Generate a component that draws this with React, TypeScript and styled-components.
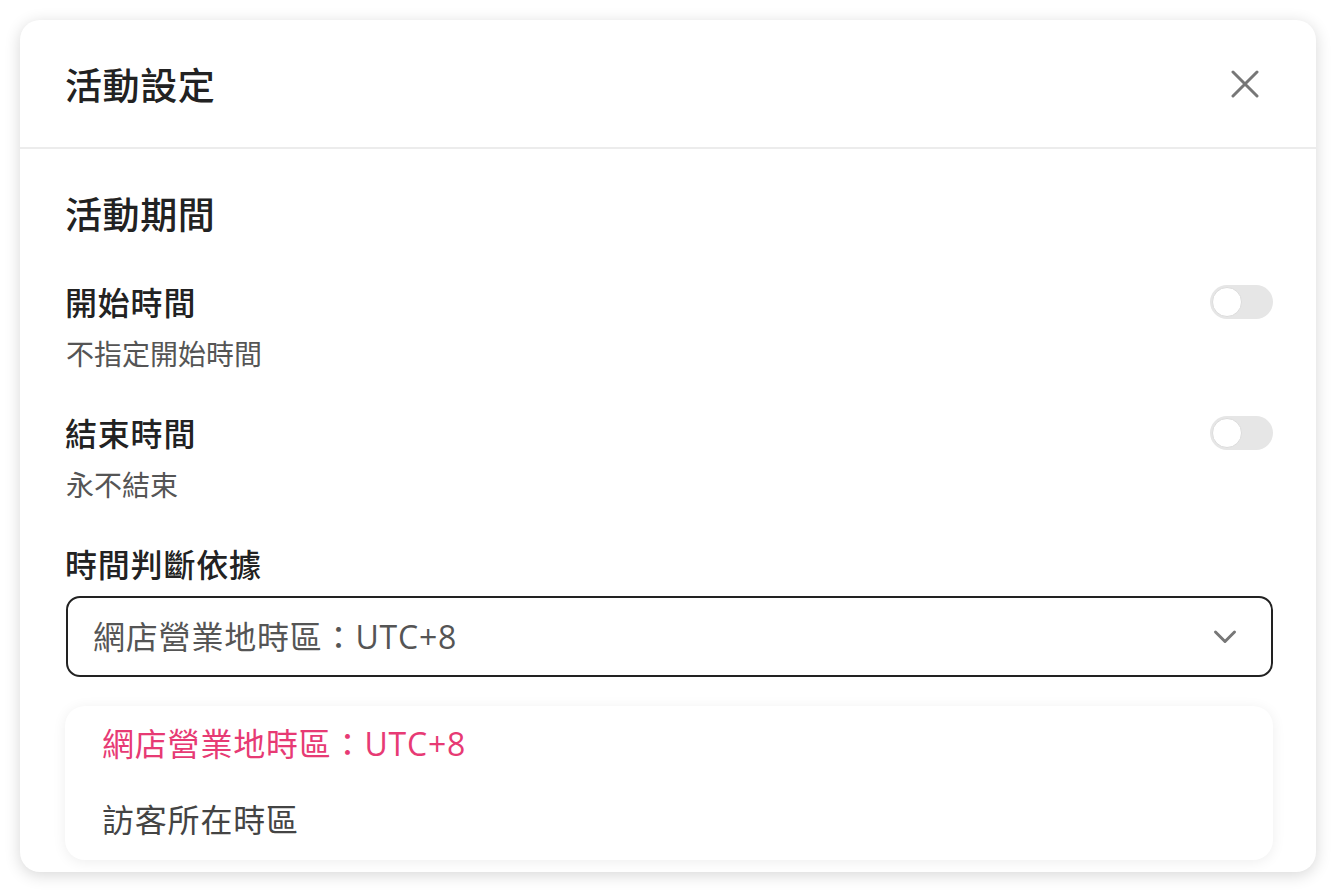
import React, { useState } from 'react';
import { styled, createGlobalStyle } from 'styled-components';

const GlobalStyle = createGlobalStyle`
  html, body {
    margin: 0;
    padding: 0;
    background: #ffffff;
  }
  body {
    font-family: 'Open Sans', 'Noto Sans CJK TC', sans-serif;
    color: #222222;
  }
  * {
    box-sizing: border-box;
  }
`;

const options = ['網店營業地時區：UTC+8', '訪客所在時區'];

export default function App() {
  const [selected] = useState(0);
  const [startOn, setStartOn] = useState(false);
  const [endOn, setEndOn] = useState(false);

  return (
    <>
      <GlobalStyle />
      <Page>
        <Modal>
          <Header>
            <Title>活動設定</Title>
            <CloseButton aria-label='close'>
              <svg width='28' height='28' viewBox='0 0 28 28' fill='none'>
                <path
                  d='M2 2L26 26M26 2L2 26'
                  stroke='#777'
                  strokeWidth='3'
                  strokeLinecap='round'
                />
              </svg>
            </CloseButton>
          </Header>
          <Body>
            <SectionTitle>活動期間</SectionTitle>
            <SettingRow>
              <RowText>
                <Label>開始時間</Label>
                <Desc>不指定開始時間</Desc>
              </RowText>
              <Toggle $on={startOn} onClick={() => setStartOn(!startOn)}>
                <Knob $on={startOn} />
              </Toggle>
            </SettingRow>
            <SettingRow>
              <RowText>
                <Label>結束時間</Label>
                <Desc>永不結束</Desc>
              </RowText>
              <Toggle $on={endOn} onClick={() => setEndOn(!endOn)}>
                <Knob $on={endOn} />
              </Toggle>
            </SettingRow>
            <Field>
              <Label>時間判斷依據</Label>
              <SelectWrap>
                <SelectBox>
                  <SelectValue>{options[selected]}</SelectValue>
                  <svg width='24' height='16' viewBox='0 0 24 16' fill='none'>
                    <path
                      d='M2.5 3L12 12.5L21.5 3'
                      stroke='#777'
                      strokeWidth='3'
                      strokeLinecap='round'
                      strokeLinejoin='round'
                    />
                  </svg>
                </SelectBox>
                <Dropdown>
                  {options.map((opt, idx) => (
                    <Option key={opt} $active={idx === selected}>
                      {opt}
                    </Option>
                  ))}
                </Dropdown>
              </SelectWrap>
            </Field>
          </Body>
        </Modal>
      </Page>
    </>
  );
}

const Page = styled.div`
  width: 1336px;
  height: 892px;
  padding: 20px;
`;

const Modal = styled.div`
  width: 1296px;
  height: 852px;
  background: #ffffff;
  border-radius: 20px;
  box-shadow: 0 3px 16px rgba(0, 0, 0, 0.16);
  display: flex;
  flex-direction: column;
  overflow: hidden;
`;

const Header = styled.div`
  height: 129px;
  flex-shrink: 0;
  display: flex;
  align-items: center;
  justify-content: space-between;
  padding: 0 51px 0 45px;
  border-bottom: 2px solid #ececec;
`;

const Title = styled.h2`
  margin: 4px 0 0;
  font-size: 37px;
  font-weight: 500;
  letter-spacing: 0.6px;
  line-height: 50px;
  color: #222;
`;

const CloseButton = styled.button`
  width: 40px;
  height: 40px;
  border: none;
  background: none;
  padding: 0;
  display: flex;
  align-items: center;
  justify-content: center;
  cursor: pointer;
`;

const Body = styled.div`
  flex: 1;
  position: relative;
  padding: 41px 43px 0 46px;
  display: flex;
  flex-direction: column;
  gap: 38px;
`;

const SectionTitle = styled.h3`
  margin: 0 0 3px -1px;
  font-size: 37px;
  font-weight: 500;
  letter-spacing: 0.6px;
  line-height: 50px;
  color: #222;
`;

const SettingRow = styled.div`
  display: flex;
  justify-content: space-between;
  align-items: flex-start;
`;

const RowText = styled.div`
  display: flex;
  flex-direction: column;
  gap: 9px;
`;

const Label = styled.div`
  margin-left: -1px;
  font-size: 32px;
  font-weight: 500;
  letter-spacing: 0.8px;
  line-height: 44px;
  color: #222;
`;

const Desc = styled.div`
  font-size: 28px;
  line-height: 40px;
  color: #555;
`;

const Toggle = styled.button<{ $on: boolean }>`
  width: 63px;
  height: 34px;
  margin-top: 4px;
  padding: 2px;
  border: none;
  border-radius: 17px;
  background: ${(p) => (p.$on ? '#e73a74' : '#e6e6e6')};
  display: flex;
  justify-content: ${(p) => (p.$on ? 'flex-end' : 'flex-start')};
  cursor: pointer;
`;

const Knob = styled.span<{ $on: boolean }>`
  width: 30px;
  height: 30px;
  border-radius: 50%;
  background: #ffffff;
  border: 1px solid #dcdcdc;
`;

const Field = styled.div`
  display: flex;
  flex-direction: column;
  gap: 9px;
`;

const SelectWrap = styled.div`
  position: relative;
`;

const SelectBox = styled.div`
  height: 81px;
  border: 2px solid #222;
  border-radius: 14px;
  display: flex;
  align-items: center;
  justify-content: space-between;
  padding: 0 34px 0 25px;
`;

const SelectValue = styled.span`
  font-size: 32px;
  letter-spacing: 0.8px;
  line-height: 44px;
  color: #555;
`;

const Dropdown = styled.ul`
  position: absolute;
  top: 110px;
  left: -1px;
  right: 0;
  margin: 0;
  padding: 0 0 2px;
  list-style: none;
  background: #ffffff;
  border-radius: 20px;
  box-shadow: 0 2px 14px rgba(0, 0, 0, 0.07);
  overflow: hidden;
`;

const Option = styled.li<{ $active: boolean }>`
  height: 76px;
  display: flex;
  align-items: center;
  padding: 0 37px 4px;
  font-size: 32px;
  letter-spacing: 0.8px;
  color: ${(p) => (p.$active ? '#e73a74' : '#444')};
`;
